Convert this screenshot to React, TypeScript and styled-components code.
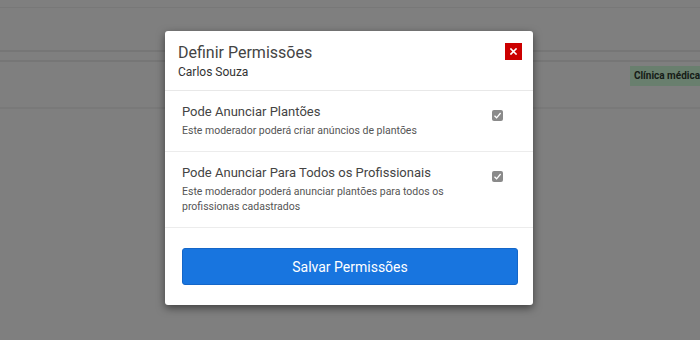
import styled, { createGlobalStyle } from "styled-components";

const GlobalStyle = createGlobalStyle`
  html, body {
    margin: 0;
    padding: 0;
    background: #fff;
    font-family: Roboto, "Liberation Sans", Arial, sans-serif;
  }
`;

const permissions = [
  {
    id: "anunciar",
    title: "Pode Anunciar Plantões",
    description: "Este moderador poderá criar anúncios de plantões",
    checked: true,
  },
  {
    id: "todos",
    title: "Pode Anunciar Para Todos os Profissionais",
    description:
      "Este moderador poderá anunciar plantões para todos os profissionas cadastrados",
    checked: true,
  },
];

export default function App() {
  return (
    <>
      <GlobalStyle />
      <Page>
        <TopBar />
        <TableHead />
        <TableRow>
          <Tag>Clínica médica</Tag>
        </TableRow>
        <Overlay>
          <Modal>
            <Header>
              <div>
                <Title>Definir Permissões</Title>
                <Subtitle>Carlos Souza</Subtitle>
              </div>
              <CloseButton aria-label="Fechar">
                <svg width="7" height="7" viewBox="0 0 7 7">
                  <path
                    d="M1 1L6 6M6 1L1 6"
                    stroke="#fff"
                    strokeWidth="1.6"
                    strokeLinecap="square"
                  />
                </svg>
              </CloseButton>
            </Header>
            {permissions.map((p) => (
              <PermissionRow key={p.id}>
                <div>
                  <PermissionTitle>{p.title}</PermissionTitle>
                  <PermissionText>{p.description}</PermissionText>
                </div>
                <CheckBox $checked={p.checked}>
                  <svg width="9" height="9" viewBox="0 0 9 9">
                    <path
                      d="M1.5 4.8L3.6 6.8L7.6 2"
                      stroke="#fff"
                      strokeWidth="1.3"
                      fill="none"
                    />
                  </svg>
                </CheckBox>
              </PermissionRow>
            ))}
            <Footer>
              <SaveButton>Salvar Permissões</SaveButton>
            </Footer>
          </Modal>
        </Overlay>
      </Page>
    </>
  );
}

const Page = styled.div`
  position: relative;
  width: 700px;
  height: 340px;
  overflow: hidden;
  background: #fff;
`;

const TopBar = styled.div`
  height: 7px;
  border-bottom: 1px solid #f0f0f0;
`;

const TableHead = styled.div`
  height: 42px;
  border-bottom: 2px solid #ececec;
  margin-bottom: 8px;
`;

const TableRow = styled.div`
  height: 41px;
  border-top: 2px solid #ececec;
  border-bottom: 2px solid #f2f2f2;
  display: flex;
  align-items: flex-start;
  justify-content: flex-end;
  padding-top: 4px;
`;

const Tag = styled.span`
  background: #d2ffdc;
  color: #2e3a30;
  font-size: 10px;
  font-weight: 700;
  line-height: 12px;
  padding: 4px 6px 4px 4px;
  margin-right: -6px;
  white-space: nowrap;
`;

const Overlay = styled.div`
  position: absolute;
  inset: 0;
  background: rgba(0, 0, 0, 0.5);
  display: flex;
  justify-content: center;
  align-items: flex-start;
  padding-top: 31px;
`;

const Modal = styled.div`
  width: 368px;
  background: #fff;
  border-radius: 3px;
  box-shadow: 0 3px 9px rgba(0, 0, 0, 0.5);
  margin-left: -2px;
`;

const Header = styled.div`
  display: flex;
  justify-content: space-between;
  align-items: flex-start;
  padding: 11px 11px 10px 13px;
  border-bottom: 1px solid #e8e8e8;
`;

const Title = styled.h4`
  margin: 0;
  font-size: 16px;
  font-weight: 400;
  color: #444;
  line-height: 22px;
`;

const Subtitle = styled.div`
  font-size: 12px;
  font-weight: 400;
  color: #333;
  line-height: 16px;
`;

const CloseButton = styled.button`
  width: 17px;
  height: 17px;
  margin-top: 1px;
  border: none;
  padding: 0;
  background: #cc0000;
  display: flex;
  align-items: center;
  justify-content: center;
  cursor: pointer;
`;

const PermissionRow = styled.div`
  display: flex;
  justify-content: space-between;
  align-items: flex-start;
  padding: 11px 30px 13px 17px;
  border-bottom: 1px solid #ececec;
`;

const PermissionTitle = styled.div`
  font-size: 13px;
  color: #444;
  line-height: 20px;
`;

const PermissionText = styled.div`
  font-size: 10.5px;
  color: #555;
  line-height: 15px;
  margin-top: 1px;
  max-width: 275px;
`;

const CheckBox = styled.span<{ $checked: boolean }>`
  width: 11px;
  height: 11px;
  margin-top: 8px;
  border-radius: 2px;
  background: ${(p) => (p.$checked ? "#8a8a8a" : "#fff")};
  display: flex;
  align-items: center;
  justify-content: center;
`;

const Footer = styled.div`
  padding: 20px 15px 20px 17px;
`;

const SaveButton = styled.button`
  width: 100%;
  height: 37px;
  border: 1px solid #1466c8;
  border-radius: 3px;
  background: #1875df;
  color: #fff;
  font-family: Roboto, "Liberation Sans", Arial, sans-serif;
  font-size: 14px;
  cursor: pointer;
`;
